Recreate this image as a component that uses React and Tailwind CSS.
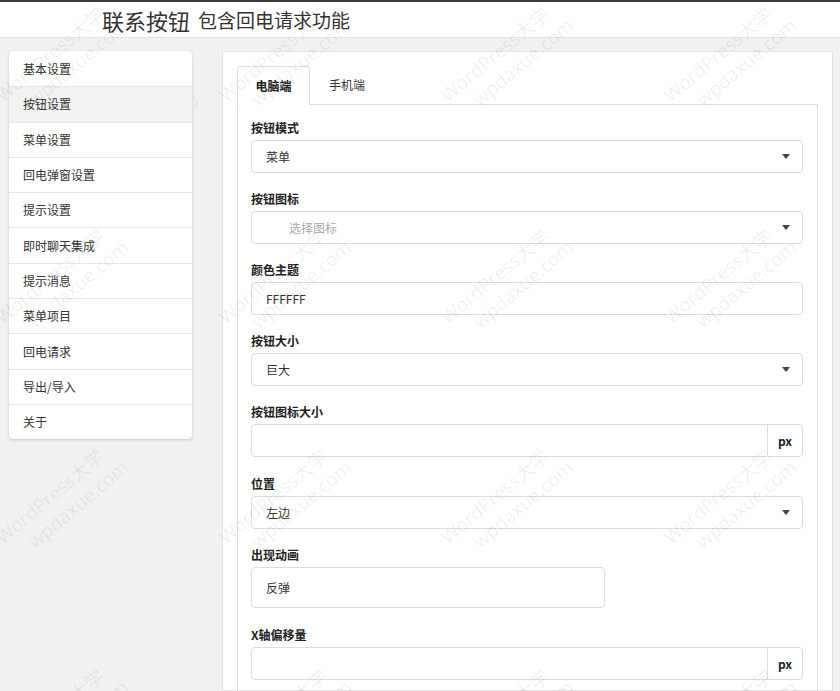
import React from 'react'

const menu = ['基本设置', '按钮设置', '菜单设置', '回电弹窗设置', '提示设置', '即时聊天集成', '提示消息', '菜单项目', '回电请求', '导出/导入', '关于']

const font = { fontFamily: '"Noto Sans CJK SC", "Noto Sans", sans-serif' }

const Caret = () => (
  <svg width="8" height="5" viewBox="0 0 8 5" className="shrink-0">
    <path d="M0 0h8L4 5z" fill="#444" />
  </svg>
)

const Label = ({ children }) => (
  <div className="h-[18px] mb-[3px] text-[12px] leading-[18px] font-bold text-[#222]">{children}</div>
)

const Select = ({ value, placeholder }) => (
  <div className="h-[33px] flex items-center justify-between rounded-[4px] border border-[#dcdcdc] bg-white pl-[14px] pr-[12px] text-[12px]">
    {placeholder ? (
      <span className="pl-[23px] text-[#aaa]">{placeholder}</span>
    ) : (
      <span className="text-[#333]">{value}</span>
    )}
    <Caret />
  </div>
)

const Input = ({ value }) => (
  <div className="h-[33px] flex items-center rounded-[4px] border border-[#dcdcdc] bg-white px-[14px] text-[12px] text-[#333]">
    {value}
  </div>
)

const PxInput = () => (
  <div className="h-[33px] flex rounded-[4px] border border-[#dcdcdc] bg-white text-[12px]">
    <div className="flex-1" />
    <div className="w-[35px] flex items-center justify-center border-l border-[#dcdcdc] font-bold text-[#222]">px</div>
  </div>
)

const Group = ({ label, children }) => (
  <div className="mb-[17px]">
    <Label>{label}</Label>
    {children}
  </div>
)

const marks = []
for (const y of [60, 282, 502, 722]) {
  for (const x of [62, 285, 507, 730]) marks.push({ x, y })
}

export default function App() {
  return (
    <div className="relative h-[691px] w-[840px] overflow-hidden bg-[#f1f1f1]" style={font}>
      {/* header */}
      <div className="h-[38px] bg-white border-t-2 border-[#3a3a3a] border-b border-b-[#e2e2e2] flex items-center pl-[102px] gap-[8px] text-[#333]">
        <span className="text-[22px] leading-none">联系按钮</span>
        <span className="text-[19px] leading-none">包含回电请求功能</span>
      </div>

      <div className="flex items-start pt-[13px] pl-[9px]">
        {/* sidebar */}
        <div className="relative w-[183px] rounded-[4px] bg-white shadow-[0_1px_3px_rgba(0,0,0,0.18)]">
          {menu.map((m, i) => (
            <div
              key={m}
              className={`h-[35.3px] flex items-center pl-[14px] text-[12px] text-[#333] ${i > 0 ? 'border-t border-[#e6e6e6]' : ''} ${i === 1 ? 'bg-[#f2f2f2]' : ''}`}
            >
              {m}
            </div>
          ))}
          <svg className="absolute left-[182px] top-[45px]" width="8" height="14" viewBox="0 0 8 14">
            <path d="M1 1l6 6-6 6" fill="none" stroke="#ddd" strokeWidth="1" />
          </svg>
        </div>

        {/* main panel */}
        <div className="ml-[30px] w-[611px] h-[640px] bg-white border border-[#e2e2e2] pt-[14px] px-[14px]">
          <div className="flex h-[39px] items-end border-b border-[#dedede]">
            <div className="-mb-px h-[39px] w-[73px] flex items-center justify-center rounded-t-[4px] border border-[#dedede] border-b-white bg-white text-[12px] font-bold text-[#222]">
              电脑端
            </div>
            <div className="h-[39px] flex items-center pl-[19px] text-[12px] text-[#333]">手机端</div>
          </div>
          <div className="h-[590px] border-x border-[#dedede] pl-[13px] pr-[14px] pt-[14px]">
            <Group label="按钮模式"><Select value="菜单" /></Group>
            <Group label="按钮图标"><Select placeholder="选择图标" /></Group>
            <Group label="颜色主题"><Input value="FFFFFF" /></Group>
            <Group label="按钮大小"><Select value="巨大" /></Group>
            <div className="mb-[18px]">
              <Label>按钮图标大小</Label>
              <PxInput />
            </div>
            <Group label="位置"><Select value="左边" /></Group>
            <div className="mb-[18px]">
              <Label>出现动画</Label>
              <div className="h-[41px] w-[354px] flex items-center rounded-[4px] border border-[#dcdcdc] bg-white px-[14px] text-[12px] text-[#333]">
                反弹
              </div>
            </div>
            <Group label="X轴偏移量"><PxInput /></Group>
          </div>
        </div>
      </div>

      {/* watermark */}
      {marks.map((p, i) => (
        <div
          key={i}
          className="pointer-events-none absolute -translate-x-1/2 -translate-y-1/2 -rotate-[40deg] whitespace-nowrap text-[19px] leading-[24px] text-[rgba(0,0,0,0.07)]"
          style={{ left: p.x, top: p.y, fontFamily: '"Open Sans", "Noto Sans CJK SC", sans-serif' }}
        >
          <div>WordPress大学</div>
          <div className="pl-[22px]">wpdaxue.com</div>
        </div>
      ))}
    </div>
  )
}
